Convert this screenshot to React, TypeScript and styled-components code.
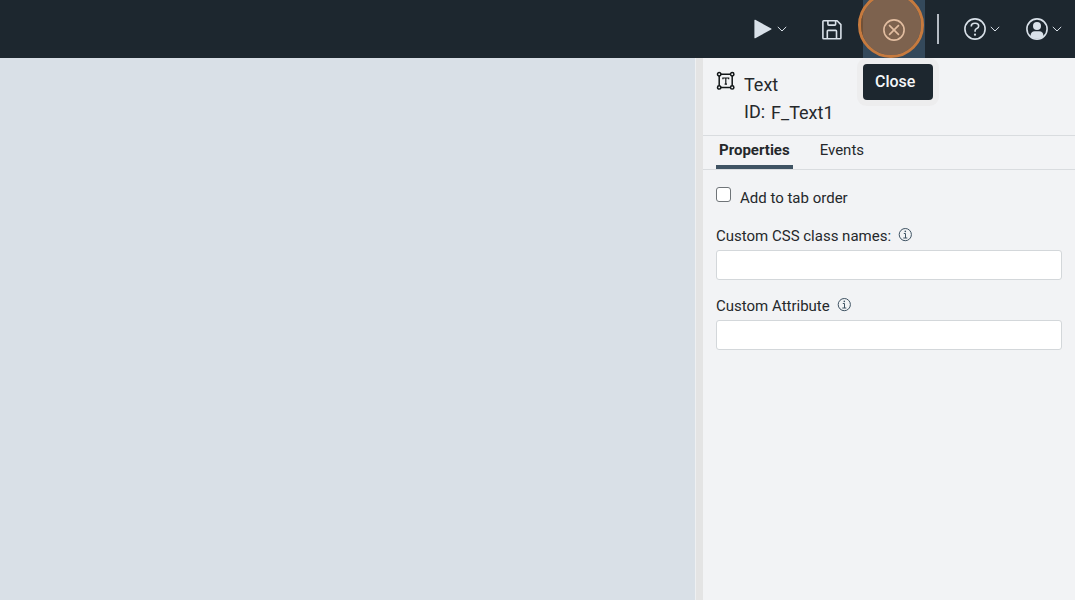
import React from "react";
import styled, { createGlobalStyle } from "styled-components";

const GlobalStyle = createGlobalStyle`
  *, *::before, *::after { box-sizing: border-box; }
  body {
    margin: 0;
    font-family: Roboto, "Liberation Sans", sans-serif;
    font-size: 15px;
    line-height: 20px;
    color: #25282b;
    background: #d9e0e7;
  }
`;

const Page = styled.div`
  display: flex;
  flex-direction: column;
  min-height: 100vh;
`;

const TopBar = styled.header`
  display: flex;
  justify-content: flex-end;
  height: 58px;
  background: #1d272f;
`;

const ToolButton = styled.button<{ $active?: boolean }>`
  position: relative;
  display: flex;
  align-items: center;
  justify-content: center;
  gap: 4px;
  width: 62px;
  padding: 0;
  border: 0;
  color: ${(p) => (p.$active ? "#ffffff" : "#d9e1e9")};
  background: ${(p) => (p.$active ? "#34495b" : "transparent")};
  svg { display: block; }
`;

const Separator = styled.span`
  align-self: center;
  width: 2px;
  height: 30px;
  margin: 0 12px;
  background: #b5bcc4;
`;

const ClickHighlight = styled.span`
  position: absolute;
  z-index: 2;
  top: -8px;
  left: -5px;
  width: 66px;
  height: 66px;
  border: 3px solid #c67a3e;
  border-radius: 50%;
  background: rgba(198, 123, 65, 0.5);
  background-clip: padding-box;
`;

const Tooltip = styled.span`
  position: absolute;
  z-index: 3;
  top: 64px;
  left: 0;
  padding: 8px 18px 8px 12px;
  border-radius: 4px;
  font: 500 16px/20px Roboto, "Liberation Sans", sans-serif;
  color: #f4f6f8;
  background: #1d272f;
  box-shadow: 0 0 0 6px rgba(225, 220, 220, 0.25);
`;

const Workspace = styled.main`
  display: flex;
  flex: 1;
`;

const Canvas = styled.section`
  flex: 1;
  background: #d9e0e7;
`;

const Splitter = styled.div`
  width: 8px;
  border-left: 1px solid #eef0f2;
  background: #e4e4e4;
`;

const Inspector = styled.aside`
  width: 372px;
  background: #f2f3f5;
`;

const ItemHeader = styled.div`
  display: flex;
  gap: 9px;
  height: 78px;
  padding: 13px 13px 0;
  border-bottom: 1px solid #d9dcdf;
`;

const ItemInfo = styled.div`
  display: flex;
  flex-direction: column;
  gap: 4px;
  padding-top: 2px;
  font-size: 18px;
  line-height: 24px;
`;

const ItemId = styled.div`
  display: flex;
  gap: 6px;
`;

const IdLabel = styled.span`
  line-height: 22px;
`;

const Tabs = styled.div`
  display: flex;
  gap: 24px;
  height: 34px;
  padding: 0 13px;
  border-bottom: 1px solid #d9dcdf;
`;

const Tab = styled.button<{ $active?: boolean }>`
  padding: 0 3px 1px;
  border: 0;
  border-bottom: 4px solid ${(p) => (p.$active ? "#3f5363" : "transparent")};
  font: ${(p) => (p.$active ? 700 : 400)} 15px/20px Roboto, "Liberation Sans", sans-serif;
  color: inherit;
  background: none;
`;

const Form = styled.form`
  padding: 17px 13px;
`;

const CheckRow = styled.label`
  display: flex;
  gap: 9px;
`;

const Checkbox = styled.input`
  appearance: none;
  width: 15px;
  height: 15px;
  margin: 0;
  border: 1px solid #6f7478;
  border-radius: 3px;
  background: #fff;
  &:checked { background: #3f5363; }
`;

const CheckText = styled.span`
  line-height: 22px;
`;

const Field = styled.div`
  margin-top: 17px;
  & + & { margin-top: 16px; }
`;

const FieldLabel = styled.label`
  display: flex;
  gap: 7px;
  margin-bottom: 4px;
  svg { display: block; margin-top: 1px; }
`;

const TextInput = styled.input`
  display: block;
  width: 100%;
  height: 30px;
  padding: 4px 8px;
  border: 1px solid #d3d7da;
  border-radius: 3px;
  font: inherit;
  background: #fff;
`;

const Chevron = () => (
  <svg width="10" height="6" viewBox="0 0 10 6" fill="none" stroke="currentColor">
    <path d="M.8.9 5 5 9.2.9" />
  </svg>
);

const PlayIcon = () => (
  <svg width="20" height="20" viewBox="0 0 20 20" fill="currentColor">
    <path d="M2.3.8 18.2 9.6c.5.3.5.6 0 .9L2.3 19.2c-.6.3-.9.1-.9-.5V1.3c0-.6.3-.8.9-.5Z" />
  </svg>
);

const SaveIcon = () => (
  <svg width="20" height="22" viewBox="0 0 20 22" fill="none" stroke="currentColor" strokeWidth="1.6" strokeLinejoin="round">
    <path d="M1.6 2.8h13.5l3.8 3.8v13.3q0 .9-.9.9H1.8q-.9 0-.9-.9V3.6q0-.8.7-.8Z" />
    <path d="M5.9 2.9v3.4q0 .8.8.8h6.1q.8 0 .8-.8V2.9M5.3 20.6v-7.4q0-.8.8-.8h7.6q.8 0 .8.8v7.4" />
  </svg>
);

const CloseIcon = () => (
  <svg width="22" height="24" viewBox="0 0 22 24" fill="none" stroke="currentColor" strokeWidth="1.6">
    <circle cx="11" cy="13" r="10.1" />
    <path d="m6.1 8.1 9.8 9.8m0-9.8-9.8 9.8" />
  </svg>
);

const HelpIcon = () => (
  <svg width="22" height="22" viewBox="0 0 22 22" fill="none" stroke="currentColor" strokeWidth="1.6">
    <circle cx="11" cy="11" r="10.1" />
    <path d="M7.3 8.4V8c0-1.8 1.2-2.8 3.4-2.8h.7c2.1 0 3.3 1 3.3 2.7 0 1.4-.7 2.1-1.9 2.6-1.2.5-1.7 1-1.7 2v1.3" />
    <circle cx="11" cy="16.7" r="1.1" fill="currentColor" stroke="none" />
  </svg>
);

const UserIcon = () => (
  <svg width="22" height="22" viewBox="0 0 22 22">
    <circle cx="11" cy="11" r="10.1" fill="none" stroke="currentColor" strokeWidth="1.6" />
    <circle cx="11" cy="8" r="4" fill="currentColor" />
    <path d="M4.6 18.5v-.7c0-3 1.5-4.5 4.2-4.5h4.4c2.7 0 4.2 1.5 4.2 4.5v.7A10 10 0 0 1 4.6 18.5Z" fill="currentColor" />
  </svg>
);

const TextBoxIcon = () => (
  <svg width="19" height="20" viewBox="0 0 19 20" fill="none" stroke="#111517" strokeWidth="1.5">
    <path d="M5 3.2h9.4M5 16.6h9.4M3.2 4.8v10M16.2 4.8v10" />
    <circle cx="3.2" cy="3.2" r="1.7" />
    <circle cx="16.2" cy="3.2" r="1.7" />
    <circle cx="3.2" cy="16.4" r="1.7" />
    <circle cx="16.2" cy="16.4" r="1.7" />
    <path d="M6.9 8.2V7h5.8v1.2M9.8 7v6.4M8.6 13.2h2.4" strokeWidth="1.2" />
  </svg>
);

const InfoIcon = () => (
  <svg width="14" height="15" viewBox="0 0 14 15" fill="none" stroke="#3f5363">
    <circle cx="7.3" cy="7.6" r="6.1" />
    <path d="M5.8 6.5h1.7V11M5.3 11h4" />
    <circle cx="7.3" cy="4.4" r=".8" fill="#3f5363" stroke="none" />
  </svg>
);

export default function App() {
  return (
    <Page>
      <GlobalStyle />
      <TopBar>
        <ToolButton type="button" aria-label="Run">
          <PlayIcon />
          <Chevron />
        </ToolButton>
        <ToolButton type="button" aria-label="Save">
          <SaveIcon />
        </ToolButton>
        <ToolButton type="button" $active>
          <CloseIcon />
          <ClickHighlight />
          <Tooltip>Close</Tooltip>
        </ToolButton>
        <Separator />
        <ToolButton type="button" aria-label="Help">
          <HelpIcon />
          <Chevron />
        </ToolButton>
        <ToolButton type="button" aria-label="Account">
          <UserIcon />
          <Chevron />
        </ToolButton>
      </TopBar>
      <Workspace>
        <Canvas />
        <Splitter />
        <Inspector>
          <ItemHeader>
            <TextBoxIcon />
            <ItemInfo>
              <div>Text</div>
              <ItemId>
                <IdLabel>ID:</IdLabel>
                <span>F_Text1</span>
              </ItemId>
            </ItemInfo>
          </ItemHeader>
          <Tabs role="tablist">
            <Tab type="button" role="tab" aria-selected="true" $active>Properties</Tab>
            <Tab type="button" role="tab" aria-selected="false">Events</Tab>
          </Tabs>
          <Form>
            <CheckRow>
              <Checkbox type="checkbox" />
              <CheckText>Add to tab order</CheckText>
            </CheckRow>
            <Field>
              <FieldLabel htmlFor="css-classes">
                Custom CSS class names:
                <InfoIcon />
              </FieldLabel>
              <TextInput id="css-classes" type="text" />
            </Field>
            <Field>
              <FieldLabel htmlFor="custom-attribute">
                Custom Attribute
                <InfoIcon />
              </FieldLabel>
              <TextInput id="custom-attribute" type="text" />
            </Field>
          </Form>
        </Inspector>
      </Workspace>
    </Page>
  );
}
